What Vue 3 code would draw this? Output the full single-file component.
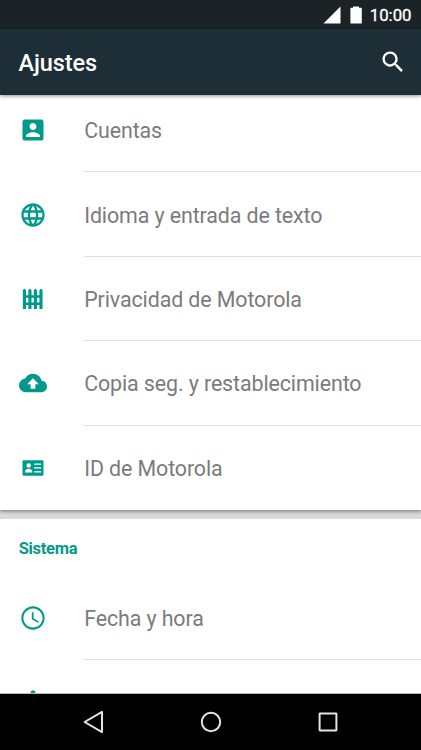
<template>
    <div class="screen">
        <div class="status-bar">
            <svg class="signal" viewBox="0 0 18 18"><path d="M0.5 17.5L17.5 0.5V17.5Z" /></svg>
            <svg class="battery" viewBox="0 0 12 18"><path d="M3 0.5H9V1.8H11.2Q11.8 1.8 11.8 2.4V16.9Q11.8 17.5 11.2 17.5H1Q0.4 17.5 0.4 16.9V2.4Q0.4 1.8 1 1.8H3Z" /></svg>
            <span class="clock">10:00</span>
        </div>
        <header class="toolbar">
            <h1>Ajustes</h1>
            <svg class="search" viewBox="0 0 24 24"><path :d="icons.search" /></svg>
        </header>
        <main class="content">
            <section class="card personal">
                <div v-for="item in personal" :key="item.label" class="row">
                    <svg class="icon" viewBox="0 0 24 24"><path :d="icons[item.icon]" fill-rule="evenodd" /></svg>
                    <span class="label"><span>{{ item.label }}</span></span>
                </div>
            </section>
            <section class="card system">
                <h2>Sistema</h2>
                <div v-for="item in system" :key="item.icon" class="row">
                    <svg class="icon" viewBox="0 0 24 24"><path :d="icons[item.icon]" fill-rule="evenodd" /></svg>
                    <span class="label"><span>{{ item.label }}</span></span>
                </div>
            </section>
        </main>
        <nav class="nav-bar">
            <svg viewBox="0 0 24 24"><path d="M20 1.9V22.1L2.6 12Z" /></svg>
            <svg viewBox="0 0 24 24"><circle cx="12" cy="12" r="9.2" /></svg>
            <svg viewBox="0 0 24 24"><rect x="3.6" y="3.6" width="16.8" height="16.8" rx="0.4" /></svg>
        </nav>
    </div>
</template>

<script setup>
import { ref } from 'vue';

const personal = ref([
    { icon: 'account', label: 'Cuentas' },
    { icon: 'language', label: 'Idioma y entrada de texto' },
    { icon: 'fence', label: 'Privacidad de Motorola' },
    { icon: 'backup', label: 'Copia seg. y restablecimiento' },
    { icon: 'idCard', label: 'ID de Motorola' },
]);

const system = ref([
    { icon: 'time', label: 'Fecha y hora' },
    { icon: 'accessibility', label: '' },
]);

const icons = {
    search: 'M15.5 14h-.79l-.28-.27C15.41 12.59 16 11.11 16 9.5 16 5.91 13.09 3 9.5 3S3 5.91 3 9.5 5.91 16 9.5 16c1.61 0 3.09-.59 4.23-1.57l.27.28v.79l5 4.99L20.49 19l-4.99-5zm-6 0C7.01 14 5 11.99 5 9.5S7.01 5 9.5 5 14 7.01 14 9.5 11.99 14 9.5 14z',
    account: 'M3 5v14c0 1.1.89 2 2 2h14c1.1 0 2-.9 2-2V5c0-1.1-.9-2-2-2H5c-1.11 0-2 .9-2 2zm12 4c0 1.66-1.34 3-3 3s-3-1.34-3-3 1.34-3 3-3 3 1.34 3 3zm-9 8c0-2 4-3.1 6-3.1s6 1.1 6 3.1v1H6v-1z',
    language: 'M11.99 2C6.47 2 2 6.48 2 12s4.47 10 9.99 10C17.52 22 22 17.52 22 12S17.52 2 11.99 2zm6.93 6h-2.95c-.32-1.25-.78-2.45-1.38-3.56 1.84.63 3.37 1.91 4.33 3.56zM12 4.04c.83 1.2 1.48 2.53 1.91 3.96h-3.82c.43-1.43 1.08-2.76 1.91-3.96zM4.26 14C4.1 13.36 4 12.69 4 12s.1-1.36.26-2h3.38c-.08.66-.14 1.32-.14 2s.06 1.34.14 2H4.26zm.82 2h2.95c.32 1.25.78 2.45 1.38 3.56-1.84-.63-3.37-1.9-4.33-3.56zm2.95-8H5.08c.96-1.66 2.49-2.93 4.33-3.56C8.81 5.55 8.35 6.75 8.03 8zM12 19.96c-.83-1.2-1.48-2.53-1.91-3.96h3.82c-.43 1.43-1.08 2.76-1.91 3.96zM14.34 14H9.66c-.09-.66-.16-1.32-.16-2s.07-1.35.16-2h4.68c.09.65.16 1.32.16 2s-.07 1.34-.16 2zm.25 5.56c.6-1.11 1.06-2.31 1.38-3.56h2.95c-.96 1.65-2.49 2.93-4.33 3.56zM16.36 14c.08-.66.14-1.32.14-2s-.06-1.34-.14-2h3.38c.16.64.26 1.31.26 2s-.1 1.36-.26 2h-3.38z',
    fence: 'M3.3 4.2L4.6 3.2L6 4.2V8.7H8V4.2L9.3 3.2L10.7 4.2V8.7H12.7V4.2L14 3.2L15.4 4.2V8.7H17.5V4.2L18.8 3.2L20.2 4.2V20.5H17.5V17.2H15.4V20.5H12.7V17.2H10.7V20.5H8V17.2H6V20.5H3.3ZM6 10.9V15H8V10.9ZM10.7 10.9V15H12.7V10.9ZM15.4 10.9V15H17.5V10.9Z',
    backup: 'M19.35 10.04C18.67 6.59 15.64 4 12 4 9.11 4 6.6 5.64 5.35 8.04 2.34 8.36 0 10.91 0 14c0 3.31 2.69 6 6 6h13c2.76 0 5-2.24 5-5 0-2.64-2.05-4.78-4.65-4.96zM14 13v4h-4v-4H7l5-5 5 5h-3z',
    idCard: 'M4 5.4H20Q21 5.4 21 6.4V17.6Q21 18.6 20 18.6H4Q3 18.6 3 17.6V6.4Q3 5.4 4 5.4ZM10.2 9.8A1.9 1.9 0 1 0 6.4 9.8A1.9 1.9 0 1 0 10.2 9.8ZM5.2 15.8H11.4V14.8C11.4 13.3 9.5 12.6 8.3 12.6S5.2 13.3 5.2 14.8ZM13 8.2V9.3H19V8.2ZM13 11.4V12.5H19V11.4ZM13 14.7V15.8H19V14.7Z',
    time: 'M11.99 2C6.47 2 2 6.48 2 12s4.47 10 9.99 10C17.52 22 22 17.52 22 12S17.52 2 11.99 2zM12 20.2c-4.5 0-8.2-3.7-8.2-8.2s3.7-8.2 8.2-8.2 8.2 3.7 8.2 8.2-3.7 8.2-8.2 8.2zM12.5 7H11v6l5.25 3.15.75-1.23-4.5-2.67z',
    accessibility: 'M12 2c1.1 0 2.1 .9 2.1 2.1s-1 2.1-2.1 2.1-2.1-1-2.1-2.1 1-2.1 2.1-2.1zm9 5.4v2h-6v13h-2v-6h-2v6H9v-13H3v-2z',
};
</script>

<style>
body {
    margin: 0;
}
</style>

<style scoped>
.screen {
    display: flex;
    flex-direction: column;
    width: 421px;
    height: 750px;
    overflow: hidden;
    background: #dadada;
    font-family: Roboto, sans-serif;
}

.status-bar {
    display: flex;
    flex: none;
    align-items: center;
    justify-content: flex-end;
    height: 29px;
    padding-right: 9.5px;
    box-sizing: border-box;
    background: #1b2327;
    color: #fff;
}

.status-bar svg {
    fill: #fff;
}

.signal {
    width: 18px;
    height: 18px;
    margin-right: 9px;
}

.battery {
    width: 12px;
    height: 18px;
    margin-right: 8px;
}

.clock {
    font-size: 16.8px;
    font-weight: 400;
    line-height: 29px;
    padding-top: 2px;
    -webkit-text-stroke: 0.3px #fff;
}

.toolbar {
    position: relative;
    z-index: 1;
    display: flex;
    flex: none;
    align-items: center;
    justify-content: space-between;
    height: 66px;
    padding: 2px 14.5px 0 18.5px;
    box-sizing: border-box;
    background: #1d2e36;
    box-shadow: 0 1px 4px rgba(0, 0, 0, 0.45);
}

.toolbar h1 {
    margin: 0;
    color: #fff;
    font-size: 23.5px;
    font-weight: 500;
    letter-spacing: -0.1px;
}

.search {
    width: 28px;
    height: 28px;
    margin-top: -1.5px;
    fill: #fff;
}

.content {
    flex: 1;
    min-height: 0;
    overflow: hidden;
    border-bottom: 1px solid #b5b5b5;
}

.card {
    background: #fff;
}

.personal {
    margin-top: -7px;
    margin-bottom: 9px;
    box-shadow: 0 1px 4px rgba(0, 0, 0, 0.5);
}

.system {
    height: 200px;
}

.system h2 {
    height: 56.6px;
    margin: 0;
    padding-left: 18.7px;
    color: #009a8a;
    font-size: 16.5px;
    font-weight: 700;
    letter-spacing: -0.3px;
    line-height: 59px;
}

.row {
    display: flex;
    align-items: center;
    height: 84.4px;
    padding-left: 18.7px;
}

.icon {
    flex: none;
    width: 28px;
    height: 28px;
    margin-right: 37.5px;
    fill: #009a8a;
}

.label {
    display: flex;
    flex: 1;
    align-items: center;
    height: 100%;
    padding-top: 2px;
    box-sizing: border-box;
    border-bottom: 1px solid #e2e2e2;
    color: #7b7b7b;
    font-size: 21.4px;
    letter-spacing: -0.1px;
    white-space: nowrap;
}

.personal .row:last-child .label {
    border-bottom-color: transparent;
}

.nav-bar {
    display: flex;
    flex: none;
    align-items: center;
    justify-content: center;
    gap: 93px;
    height: 56px;
    background: #000;
}

.nav-bar svg {
    width: 24px;
    height: 24px;
    fill: none;
    stroke: #e4e4e4;
    stroke-width: 2;
    stroke-linejoin: round;
}
</style>
